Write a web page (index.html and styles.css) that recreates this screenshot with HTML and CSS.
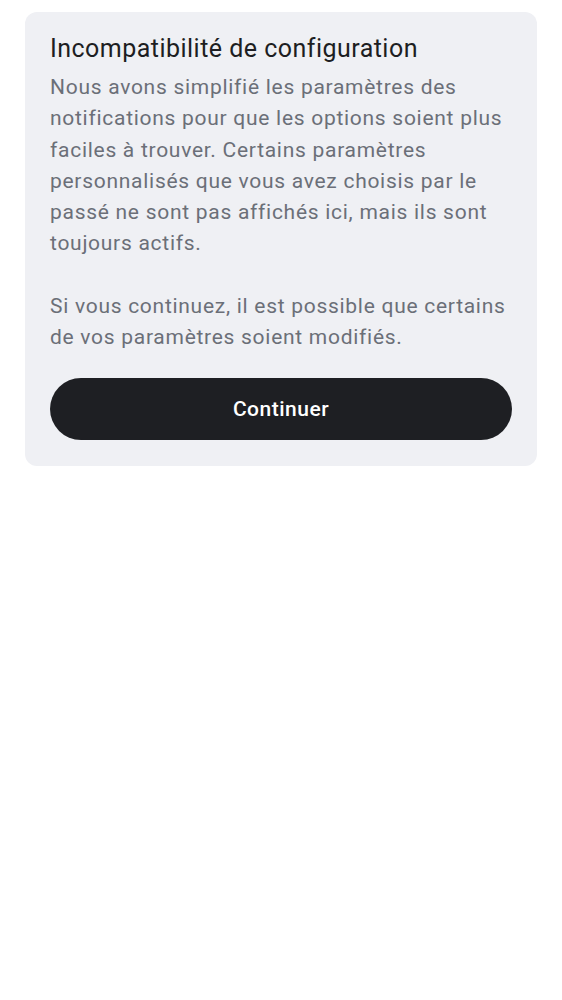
FILE: index.html
```html
<!DOCTYPE html>
<html lang="fr">
<head>
<meta charset="utf-8">
<link rel="stylesheet" href="styles.css">
</head>
<body>
<div class="card">
  <h1 class="title">Incompatibilité de configuration</h1>
  <p class="text">Nous avons simplifié les paramètres des notifications pour que les options soient plus faciles à trouver. Certains paramètres personnalisés que vous avez choisis par le passé ne sont pas affichés ici, mais ils sont toujours actifs.</p>
  <p class="text gap">Si vous continuez, il est possible que certains de vos paramètres soient modifiés.</p>
  <button class="btn">Continuer</button>
</div>
</body>
</html>
```
FILE: styles.css
```css
html, body { margin: 0; padding: 0; background: #ffffff; }
body { font-family: Roboto, "Noto Sans", sans-serif; padding: 12px 25px; }
.card {
  background: #eff0f4;
  border-radius: 12px;
  padding: 21px 25px 26px;
  display: flex;
  flex-direction: column;
}
.title {
  margin: 0 0 7px;
  font-size: 25px;
  font-weight: 400;
  line-height: 32px;
  letter-spacing: 0.47px;
  color: #1d1e22;
}
.text {
  margin: 0;
  font-size: 21px;
  line-height: 31.25px;
  letter-spacing: 0.72px;
  color: #6b6f78;
}
.gap { margin-top: 31.25px; }
.btn {
  margin-top: 25px;
  height: 62px;
  border: none;
  border-radius: 31px;
  background: #1e1f23;
  color: #ffffff;
  font-family: Roboto, "Noto Sans", sans-serif;
  font-size: 21px;
  font-weight: 500;
  letter-spacing: 0.5px;
  padding: 0;
}
```
